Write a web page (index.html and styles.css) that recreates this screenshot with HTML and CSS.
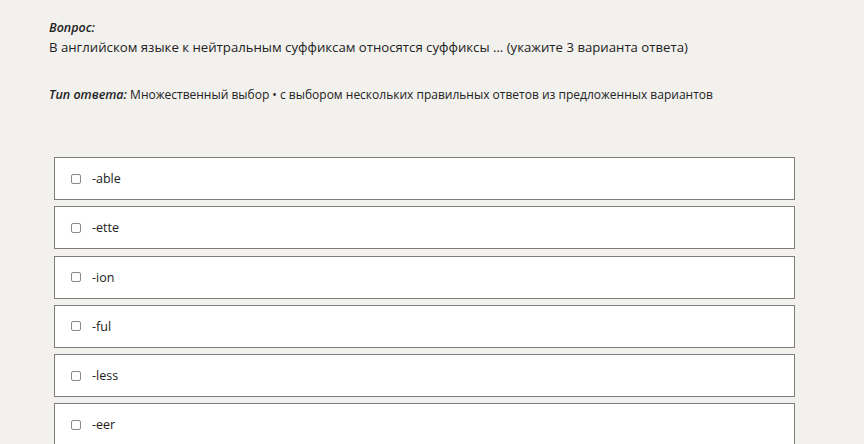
FILE: index.html
```html
<!DOCTYPE html>
<html lang="ru">
<head>
  <meta charset="UTF-8">
  <title>Вопрос</title>
  <link rel="stylesheet" href="styles.css">
</head>
<body>
  <div class="page">
    <div class="question">
      <div class="label">Вопрос:</div>
      <div class="text">В английском языке к нейтральным суффиксам относятся суффиксы … (укажите 3 варианта ответа)</div>
    </div>
    <div class="answer-type"><span class="label">Тип ответа:</span> Множественный выбор • с выбором нескольких правильных ответов из предложенных вариантов</div>

    <div class="options">
      <label class="option"><span class="box"></span>-able</label>
      <label class="option"><span class="box"></span>-ette</label>
      <label class="option"><span class="box"></span>-ion</label>
      <label class="option"><span class="box"></span>-ful</label>
      <label class="option"><span class="box"></span>-less</label>
      <label class="option"><span class="box"></span>-eer</label>
    </div>
  </div>
</body>
</html>
```

FILE: styles.css
```css
body {
  margin: 0;
  padding: 0;
  background-color: #f2f1ee;
  color: #222;
  font-family: "Open Sans", "Noto Sans", sans-serif;
  font-size: 12.5px;
}
.page {
  padding: 19px 0 0 49px;
}
.label {
  font-weight: 600;
  font-style: italic;
}
.question .text {
  margin-top: 2px;
  font-size: 13.2px;
}
.answer-type {
  margin-top: 30px;
  font-size: 12px;
}
.answer-type .label {
  font-size: 12.5px;
}
.options {
  margin: 54px 0 0 5px;
  width: 741px;
  display: flex;
  flex-direction: column;
  gap: 6.3px;
}
.option {
  display: flex;
  align-items: center;
  height: 41px;
  background: #fff;
  border: 1px solid #7c7c7c;
  padding-left: 16px;
  font-size: 12.5px;
}
.box {
  width: 8px;
  height: 8px;
  border: 1px solid #8a8a8a;
  border-radius: 2px;
  margin-right: 11px;
}
```
